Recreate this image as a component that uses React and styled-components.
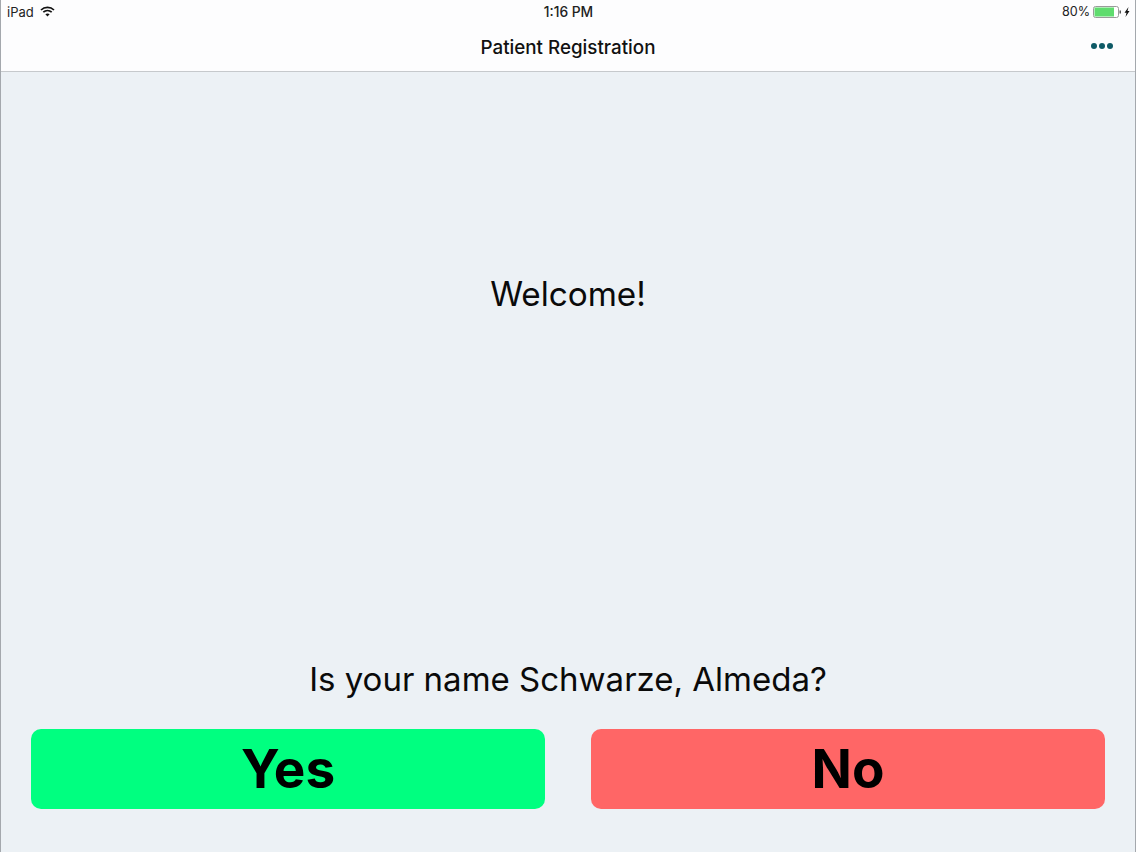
import styled, { createGlobalStyle } from 'styled-components';

const GlobalStyle = createGlobalStyle`
	html, body {
		margin: 0;
		padding: 0;
		background: #ecf1f5;
	}
	body {
		font-family: Inter, "Liberation Sans", sans-serif;
		color: #000;
	}
`;

const Screen = styled.div`
	width: 1136px;
	height: 852px;
	display: flex;
	flex-direction: column;
	box-sizing: border-box;
	border-left: 1px solid #a4a8ad;
	border-right: 1px solid #a4a8ad;
	overflow: hidden;
`;
const Header = styled.header`
	height: 72px;
	flex: none;
	box-sizing: border-box;
	background: #fdfdfe;
	border-bottom: 1px solid #c6c9cc;
	display: flex;
	flex-direction: column;
`;
const StatusBar = styled.div`
	height: 23px;
	display: grid;
	grid-template-columns: 1fr auto 1fr;
	align-items: center;
	padding: 0 5px 0 6px;
	font-size: 13px;
	color: #222;
`;
const StatusLeft = styled.div`
	display: flex;
	align-items: center;
	gap: 6px;
`;
const StatusTime = styled.div`
	font-weight: 500;
	font-size: 13.8px;
`;
const StatusRight = styled.div`
	display: flex;
	align-items: center;
	justify-content: flex-end;
	gap: 3px;
	font-size: 12.6px;
`;
const NavBar = styled.div`
	flex: 1;
	display: grid;
	grid-template-columns: 1fr auto 1fr;
	align-items: center;
	padding: 0 22px;
`;
const NavTitle = styled.div`
	grid-column: 2;
	font-size: 18.8px;
	font-weight: 500;
	color: #111;
`;
const MoreButton = styled.div`
	justify-self: end;
	display: flex;
	gap: 2px;
	margin-bottom: 2px;
`;
const Dot = styled.span`
	width: 6px;
	height: 6px;
	border-radius: 50%;
	background: #0e5a66;
`;
const Main = styled.main`
	flex: 1;
	display: flex;
	flex-direction: column;
	align-items: center;
	padding: 0 30px 43px;
`;
const Welcome = styled.div`
	margin-top: 200px;
	font-size: 33.3px;
	line-height: 44px;
	color: #0a0a0a;
`;
const Question = styled.div`
	margin-top: auto;
	font-size: 33px;
	line-height: 44px;
	color: #0a0a0a;
`;
const Choices = styled.div`
	width: 100%;
	margin-top: 28px;
	display: grid;
	grid-template-columns: 514px 514px;
	justify-content: space-between;
`;
const Choice = styled.button`
	height: 80px;
	border: none;
	border-radius: 10px;
	padding: 0;
	font-family: inherit;
	font-size: 53px;
	font-weight: 700;
	color: #000;
	background: ${(props) => props.color};
`;

const Wifi = () => (
	<svg width="15" height="11" viewBox="0 0 15 11" fill="none" stroke="#111" strokeWidth="1.7">
		<path d="M1 4 C4.5 .6 10.5 .6 14 4" />
		<path d="M3.3 6.2 C5.7 4 9.3 4 11.7 6.2" />
		<path d="M7.5 10.5 L5.4 8.3 C6.6 7.3 8.4 7.3 9.6 8.3 Z" fill="#111" stroke="none" />
	</svg>
);

const Battery = () => (
	<svg width="37" height="12" viewBox="0 0 37 12">
		<rect x="0.5" y="0.5" width="25" height="11" rx="2" fill="#fff" stroke="#9a9a9a" />
		<rect x="1.5" y="1.5" width="19.5" height="9" fill="#5fdc6e" />
		<rect x="26.5" y="4.5" width="1.5" height="3" fill="#555" />
		<path d="M35.5 1 L31.5 6.8 H33.5 L32.5 11 L36.5 5 H34.5 Z" fill="#111" />
	</svg>
);

const App = () => {
	return (
		<Screen>
			<GlobalStyle />
			<Header>
				<StatusBar>
					<StatusLeft>
						iPad
						<Wifi />
					</StatusLeft>
					<StatusTime>1:16 PM</StatusTime>
					<StatusRight>
						80%
						<Battery />
					</StatusRight>
				</StatusBar>
				<NavBar>
					<NavTitle>Patient Registration</NavTitle>
					<MoreButton>
						<Dot />
						<Dot />
						<Dot />
					</MoreButton>
				</NavBar>
			</Header>
			<Main>
				<Welcome>Welcome!</Welcome>
				<Question>Is your name Schwarze, Almeda?</Question>
				<Choices>
					<Choice color="#00ff80">Yes</Choice>
					<Choice color="#ff6666">No</Choice>
				</Choices>
			</Main>
		</Screen>
	);
};

export default App;
